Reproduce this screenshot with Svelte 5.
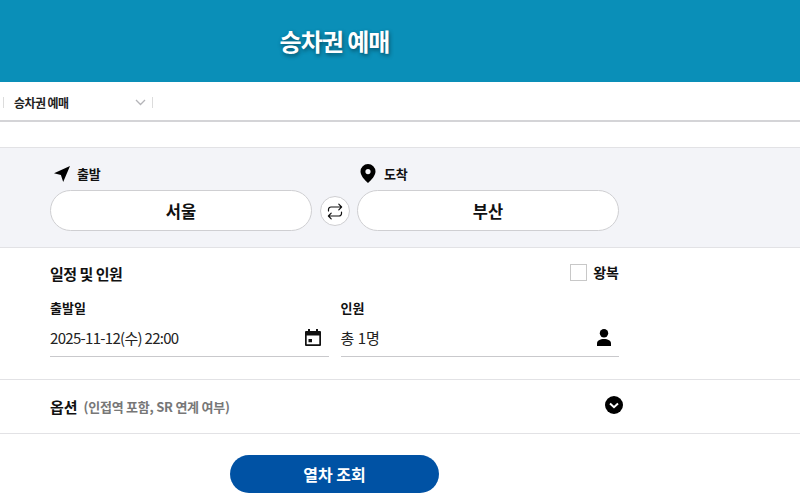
<script>
	let from = '서울';
	let to = '부산';
	let departure = '2025-11-12(수) 22:00';
	let people = '총 1명';
	let roundTrip = false;
</script>

<div class="page">
	<header class="top">
		<h1>승차권 예매</h1>
	</header>

	<nav class="crumb">
		<div class="crumb-item">
			<span>승차권 예매</span>
			<svg width="11" height="7" viewBox="0 0 11 7"><path d="M1 1l4.5 4.5L10 1" fill="none" stroke="#b4b4b8" stroke-width="1.3" /></svg>
		</div>
	</nav>

	<section class="stations">
		<div class="inner station-row">
			<div class="station">
				<div class="station-label">
					<svg width="18" height="18" viewBox="0 0 18 18"><path d="M17 1L1 8.2l6.9 1.9L10.2 17z" fill="#000" /></svg>
					<span>출발</span>
				</div>
				<button class="station-btn">{from}</button>
			</div>
			<button class="swap" aria-label="swap">
				<svg width="16" height="17" viewBox="0 0 16 17" fill="none" stroke="#111" stroke-width="1.2" stroke-linecap="round" stroke-linejoin="round">
					<path d="M1.5 8V6.5a2.5 2.5 0 0 1 2.5-2.5h10.5M11.8 1.2l2.8 2.8-2.8 2.8" />
					<path d="M14.5 9v1.5a2.5 2.5 0 0 1-2.5 2.5H1.5M4.2 10.2L1.4 13l2.8 2.8" />
				</svg>
			</button>
			<div class="station">
				<div class="station-label">
					<svg class="pin" width="16" height="19" viewBox="0 0 16 19"><path fill-rule="evenodd" d="M8 0a7.5 7.5 0 0 1 7.5 7.5c0 4-4 8.500-7.500 11.500C4.500 16 .5 11.500.5 7.500A7.500 7.500 0 0 1 8 0zm0 5a2.600 2.600 0 1 0 0 5.200A2.600 2.600 0 0 0 8 5z" fill="#000" /></svg>
					<span>도착</span>
				</div>
				<button class="station-btn">{to}</button>
			</div>
		</div>
	</section>

	<section class="schedule">
		<div class="inner">
			<div class="schedule-head">
				<h2>일정 및 인원</h2>
				<label class="round">
					<input type="checkbox" bind:checked={roundTrip} />
					<span>왕복</span>
				</label>
			</div>
			<div class="fields">
				<div class="field">
					<div class="field-label">출발일</div>
					<div class="field-value">
						<span class="date">{departure}</span>
						<svg width="16" height="17" viewBox="0 0 16 17"><path fill-rule="evenodd" d="M3 0h2v2h6V0h2v2h2a1 1 0 0 1 1 1v13a1 1 0 0 1-1 1H1a1 1 0 0 1-1-1V3a1 1 0 0 1 1-1h2zM1.700 6.500v8.800h12.600V6.500zM3.500 10h3.500v3.300H3.500z" fill="#111" /></svg>
					</div>
				</div>
				<div class="field">
					<div class="field-label">인원</div>
					<div class="field-value">
						<span>{people}</span>
						<svg width="14" height="17" viewBox="0 0 14 17"><circle cx="7" cy="4.300" r="4.200" fill="#000" /><path d="M0 17v-2.500C0 11.500 3 10 7 10s7 1.500 7 4.500V17z" fill="#000" /></svg>
					</div>
				</div>
			</div>
		</div>
	</section>

	<section class="options">
		<div class="inner options-row">
			<div class="options-text">
				<strong>옵션</strong>
				<span>(인접역 포함, SR 연계 여부)</span>
			</div>
			<svg class="options-toggle" width="18" height="18" viewBox="0 0 18 18"><circle cx="9" cy="9" r="9" fill="#000" /><path d="M5 7.500l4 3.700 4-3.700" fill="none" stroke="#fff" stroke-width="2" /></svg>
		</div>
	</section>

	<div class="inner action">
		<button class="search">열차 조회</button>
	</div>
</div>

<style>
	:global(body) {
		margin: 0;
		background: #fff;
		font-family: 'Noto Sans CJK KR', 'Noto Sans', sans-serif;
		color: #111;
	}

	.page {
		width: 800px;
		height: 500px;
		overflow: hidden;
	}

	.inner {
		box-sizing: border-box;
		width: 669px;
		padding: 0 50px;
	}

	.top {
		box-sizing: border-box;
		height: 82px;
		width: 100%;
		background: #0a8fb8;
		padding: 0 131px 2px 0;
		display: flex;
		align-items: center;
		justify-content: center;
	}

	h1 {
		margin: 0;
		font-size: 24px;
		font-weight: 700;
		letter-spacing: -1px;
		color: #fff;
		text-shadow: 1px 2px 4px rgba(0, 0, 0, 0.45);
	}

	.crumb {
		box-sizing: border-box;
		height: 40px;
		border-bottom: 2px solid #d4d4d7;
		padding: 15px 0 0 3px;
		margin-bottom: 25px;
	}

	.crumb-item {
		box-sizing: border-box;
		width: 150px;
		height: 11px;
		padding: 0 6px 0 10px;
		border-left: 1px solid #dcdcdc;
		border-right: 1px solid #dcdcdc;
		display: flex;
		align-items: center;
		justify-content: space-between;
		font-size: 12px;
		font-weight: 700;
		letter-spacing: -0.6px;
		color: #222;
	}

	.stations {
		box-sizing: border-box;
		height: 101px;
		background: #f3f4f8;
		border-top: 1px solid #e2e2e5;
		border-bottom: 1px solid #e2e2e5;
		padding-top: 12px;
	}

	.station-row {
		display: flex;
		align-items: flex-end;
		gap: 7px;
	}

	.station {
		flex: 1;
	}

	.station-label {
		display: flex;
		align-items: center;
		gap: 6px;
		height: 30px;
		padding: 0 0 3px 3px;
		box-sizing: border-box;
		font-size: 13px;
		font-weight: 700;
		letter-spacing: -0.3px;
	}

	.pin {
		margin-right: 2px;
	}

	.station-btn {
		display: block;
		width: 100%;
		height: 41px;
		padding: 0;
		background: #fff;
		border: 1px solid #cfcfd2;
		border-radius: 21px;
		font-family: inherit;
		font-size: 16.5px;
		font-weight: 700;
		color: #111;
	}

	.swap {
		flex: none;
		box-sizing: border-box;
		width: 30px;
		height: 30px;
		margin: 0 0 5px 1px;
		padding: 0;
		background: #fff;
		border: 1px solid #cfcfd2;
		border-radius: 50%;
		display: flex;
		align-items: center;
		justify-content: center;
	}

	.schedule {
		box-sizing: border-box;
		height: 132px;
		border-bottom: 1px solid #e2e2e5;
		padding-top: 12px;
	}

	.schedule-head {
		display: flex;
		align-items: center;
		justify-content: space-between;
		height: 26px;
	}

	h2 {
		margin: 0;
		font-size: 15px;
		font-weight: 700;
		letter-spacing: -0.5px;
	}

	.round {
		display: flex;
		align-items: center;
		gap: 6px;
		font-size: 14px;
		font-weight: 700;
		margin-top: -2px;
	}

	.round input {
		appearance: none;
		width: 17px;
		height: 17px;
		margin: 0;
		background: #fff;
		border: 1px solid #c8c8c8;
	}

	.fields {
		display: flex;
		gap: 12px;
		margin-top: 12px;
	}

	.field {
		flex: 1;
	}

	.field-label {
		font-size: 13px;
		font-weight: 700;
		height: 23px;
		line-height: 20px;
	}

	.field-value {
		box-sizing: border-box;
		height: 36px;
		border-bottom: 1px solid #c9c9cc;
		padding: 0 8px 2px 0;
		display: flex;
		align-items: center;
		justify-content: space-between;
		font-size: 15px;
		color: #222;
	}

	.date {
		letter-spacing: -0.7px;
	}

	.options {
		box-sizing: border-box;
		height: 54px;
		border-bottom: 1px solid #e2e2e5;
	}

	.options-row {
		height: 100%;
		display: flex;
		align-items: center;
		justify-content: space-between;
	}

	.options-text {
		display: flex;
		align-items: center;
		gap: 6px;
	}

	.options-text strong {
		font-size: 15px;
		font-weight: 700;
	}

	.options-text span {
		font-size: 13px;
		font-weight: 700;
		letter-spacing: -0.25px;
		color: #777;
	}

	.options-toggle {
		margin: -4px -4px 0 0;
	}

	.action {
		display: flex;
		justify-content: center;
		padding-top: 21px;
	}

	.search {
		width: 209px;
		height: 38px;
		padding: 0;
		background: #0052a4;
		border: none;
		border-radius: 19px;
		font-family: inherit;
		font-size: 16px;
		font-weight: 700;
		color: #fff;
	}
</style>
